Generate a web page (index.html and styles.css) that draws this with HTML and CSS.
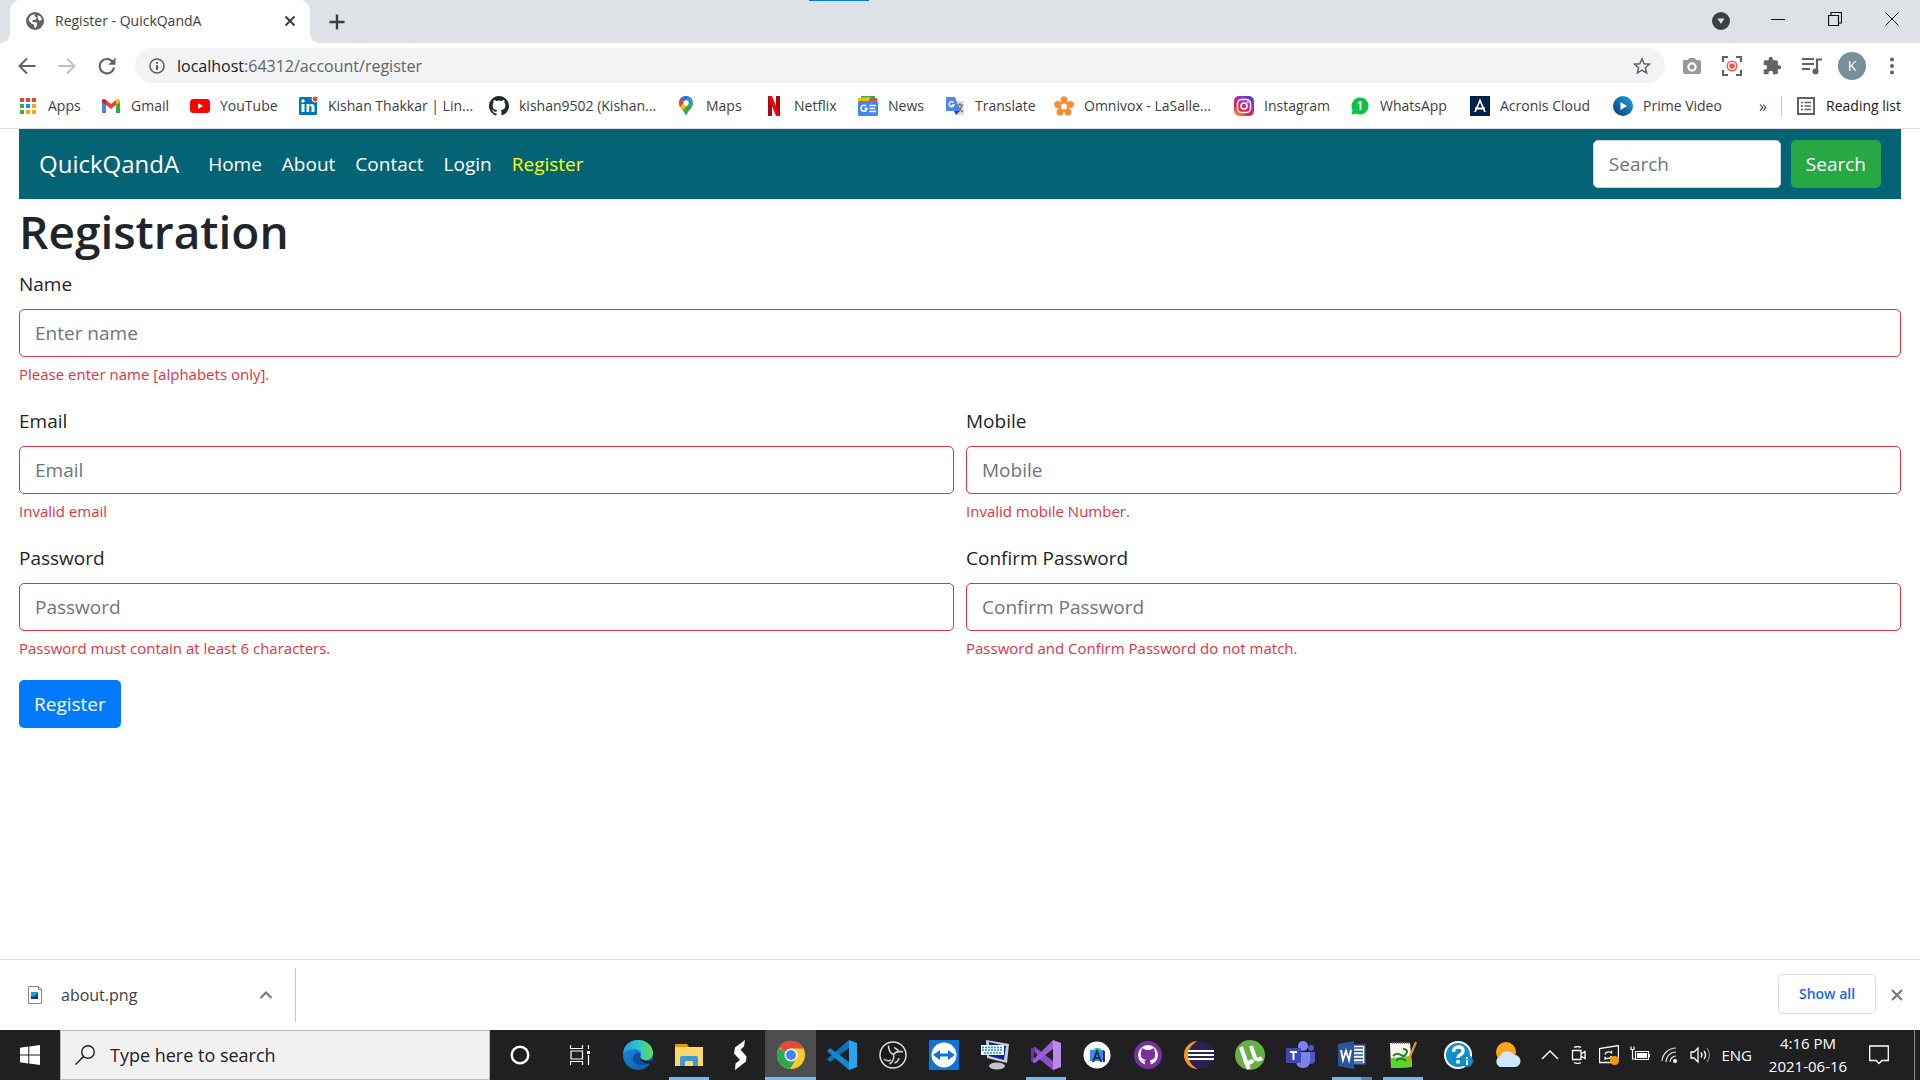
FILE: index.html
```html
<!DOCTYPE html>
<html lang="en">
<head>
<meta charset="utf-8">
<title>Register - QuickQandA</title>
<link rel="stylesheet" href="styles.css">
</head>
<body>
<header class="browser">
  <div class="tabstrip">
    <div class="loadbar"></div>
    <div class="tab">
      <svg class="i18" viewBox="0 0 18 18"><circle cx="9" cy="9" r="9" fill="#5f6368"/><path d="M2.500 8C3 5 5.500 2.500 9 2.300L8.500 4l2 1.500-.5 2-3 .5-1 2 4 .2 1.500 1.800-1.500 3.500-1.500.2-.5-3-3-1.500zM11.500 3l3 1.500 1.500 3-2.500 1.500-1.500-2z" fill="#fff"/></svg>
      <span class="tab-title">Register - QuickQandA</span>
      <button class="icon-btn" aria-label="Close tab"><svg class="i12" viewBox="0 0 12 12"><path d="M1.500 1.500l9 9M10.500 1.500l-9 9" stroke="#3c4043" stroke-width="2"/></svg></button>
    </div>
    <button class="icon-btn new-tab" aria-label="New tab"><svg class="i16" viewBox="0 0 16 16"><path d="M8 .5v15M.5 8h15" stroke="#3c4043" stroke-width="2.400"/></svg></button>
    <div class="window-controls">
      <button class="icon-btn tabsearch" aria-label="Search tabs"><svg class="i18" viewBox="0 0 18 18"><circle cx="9" cy="9" r="9" fill="#3c4043"/><path d="M5.500 6.500h7L9 12z" fill="#dee1e6"/></svg></button>
      <button class="icon-btn" aria-label="Minimise"><svg class="i14" viewBox="0 0 14 14"><path d="M0 7.500h14" stroke="#111"/></svg></button>
      <button class="icon-btn" aria-label="Restore"><svg class="i14" viewBox="0 0 14 14"><path d="M.5 3.500h10v10H.5zM3 3V.5h10.500V11H11" fill="none" stroke="#111" stroke-width="1.200"/></svg></button>
      <button class="icon-btn" aria-label="Close"><svg class="i14" viewBox="0 0 14 14"><path d="M.5.5l13 13M13.500.5l-13 13" stroke="#111"/></svg></button>
    </div>
  </div>
  <div class="toolbar">
    <button class="icon-btn" aria-label="Back"><svg class="i18" viewBox="0 0 18 18"><path d="M17.500 9H2M9 1.500L1.500 9 9 16.500" fill="none" stroke="#5f6368" stroke-width="2"/></svg></button>
    <button class="icon-btn" aria-label="Forward"><svg class="i18" viewBox="0 0 18 18"><path d="M.5 9H16M9 1.500L16.500 9 9 16.500" fill="none" stroke="#bfc1c4" stroke-width="2"/></svg></button>
    <button class="icon-btn" aria-label="Reload"><svg class="i18" viewBox="0 0 18 18"><path d="M14.800 5A7.200 7.200 0 1 0 16 10.500" fill="none" stroke="#5f6368" stroke-width="2.100"/><path d="M17.500.5v7.300h-7.300z" fill="#5f6368"/></svg></button>
    <div class="omnibox">
      <svg class="i16" viewBox="0 0 16 16"><circle cx="8" cy="8" r="7" fill="none" stroke="#5f6368" stroke-width="1.600"/><path d="M8 7v5M8 4v1.800" stroke="#5f6368" stroke-width="2"/></svg>
      <span class="url"><b>localhost</b>:64312/account/register</span>
      <svg class="i18" viewBox="0 0 18 18"><path d="M9 1.800l2.100 4.900 5.300.5-4 3.500 1.200 5.200L9 13.100l-4.600 2.800 1.200-5.200-4-3.500 5.300-.5z" fill="none" stroke="#5f6368" stroke-width="1.500"/></svg>
    </div>
    <div class="extensions">
      <svg class="i20" viewBox="0 0 20 20"><path d="M2 4h4l1-2h6l1 2h3q2 0 2 2v10q0 2-2 2H3q-2 0-2-2V6q0-2 1-2z" fill="#999"/><circle cx="10" cy="11" r="3.600" fill="#999" stroke="#fff" stroke-width="2.200"/></svg>
      <svg class="i20" viewBox="0 0 20 20"><path d="M1 6V1h5M14 1h5v5M19 14v5h-5M6 19H1v-5" fill="none" stroke="#5f6368" stroke-width="2.200"/><circle cx="10" cy="10" r="4.800" fill="none" stroke="#f0594c" stroke-width="1.400"/><circle cx="10" cy="10" r="2.800" fill="#f0594c"/></svg>
      <svg class="i20" viewBox="0 0 24 24"><path d="M20.500 11H19V7c0-1.100-.9-2-2-2h-4V3.500a2.500 2.500 0 0 0-5 0V5H4a2 2 0 0 0-2 2v3.800h1.500a2.700 2.700 0 0 1 0 5.400H2V20a2 2 0 0 0 2 2h3.800v-1.500a2.700 2.700 0 0 1 5.400 0V22H17a2 2 0 0 0 2-2v-4h1.500a2.500 2.500 0 0 0 0-5z" fill="#5f6368"/></svg>
      <svg class="i20" viewBox="0 0 20 20"><path d="M0 3h12M0 8h12M0 13h8" stroke="#5f6368" stroke-width="2"/><path d="M15 16V3.500h5" fill="none" stroke="#5f6368" stroke-width="2.200"/><circle cx="13.500" cy="15.500" r="3" fill="#5f6368"/></svg>
      <span class="avatar">K</span>
      <svg class="i20" viewBox="0 0 20 20" fill="#5f6368"><circle cx="10" cy="3.500" r="2"/><circle cx="10" cy="10" r="2"/><circle cx="10" cy="16.500" r="2"/></svg>
    </div>
  </div>
  <nav class="bookmarks">
    <a href="#"><svg class="i20" viewBox="0 0 20 20"><path d="M2 2h4v4H2zM8 2h4v4H8zM14 2h4v4h-4z" fill="#ea4335"/><path d="M2 8h4v4H2z" fill="#34a853"/><path d="M8 8h4v4H8z" fill="#1a8cff"/><path d="M14 8h4v4h-4zM8 14h4v4H8zM14 14h4v4h-4z" fill="#fba70b"/><path d="M2 14h4v4H2z" fill="#34a853"/></svg>Apps</a>
    <a href="#"><svg class="i20" viewBox="0 0 20 20"><path d="M1 5v12h4V8z" fill="#4285f4"/><path d="M15 8v9h4V5z" fill="#34a853"/><path d="M5 4l5 4 5-4v5l-5 4-5-4z" fill="#ea4335"/><path d="M1 5c0-2 2-3 4-1v5L1 6z" fill="#c5221f"/><path d="M19 5c0-2-2-3-4-1v5l4-3z" fill="#fbbc04"/></svg>Gmail</a>
    <a href="#"><svg class="i20" viewBox="0 0 20 20"><rect y="3" width="20" height="14" rx="3.500" fill="#f00"/><path d="M8 7v6l5-3z" fill="#fff"/></svg>YouTube</a>
    <a href="#"><svg class="i20" viewBox="0 0 20 20"><rect x="1" y="1" width="18" height="18" rx="1.500" fill="#0077b5"/><path d="M3.500 8h3v8h-3zM8.500 8h2.700v1.200C13 7 16.500 7.800 16.500 11v5h-3v-4.500c0-2-2.300-1.800-2.300 0V16H8.500z" fill="#fff"/><circle cx="5" cy="5" r="1.700" fill="#fff"/><circle cx="17" cy="3" r="3" fill="#f44336" stroke="#fff"/></svg>Kishan Thakkar | Lin...</a>
    <a href="#"><svg class="i20" viewBox="0 0 16 16"><path fill="#24292e" d="M8 0C3.580 0 0 3.580 0 8c0 3.540 2.290 6.530 5.470 7.590.4.070.55-.17.55-.38v-1.490C3.780 14.200 3.310 12.600 3.310 12.600c-.36-.92-.9-1.170-.9-1.170-.7-.5.05-.5.05-.5.8.06 1.230.83 1.230.83.72 1.230 1.870.87 2.330.66.07-.52.280-.87.5-1.070-1.770-.2-3.640-.89-3.640-3.950 0-.87.31-1.590.82-2.150-.08-.2-.36-1.020.08-2.120 0 0 .67-.21 2.200.82a7.600 7.600 0 0 1 4 0c1.530-1.040 2.200-.82 2.200-.82.44 1.100.16 1.920.08 2.120.51.56.82 1.270.82 2.150 0 3.070-1.870 3.750-3.650 3.950.29.25.54.73.54 1.480v2.200c0 .21.15.46.55.38A8 8 0 0 0 16 8c0-4.420-3.580-8-8-8z"/></svg>kishan9502 (Kishan...</a>
    <a href="#"><svg class="i20" viewBox="0 0 20 20"><path d="M10 0a7 7 0 0 1 7 7c0 5-5 7-7 13C8 14 3 12 3 7a7 7 0 0 1 7-7z" fill="#34a853"/><path d="M10 0a7 7 0 0 1 6.500 4.500L10 8z" fill="#4285f4"/><path d="M4.500 2.600A7 7 0 0 1 10 0l2 .3L8 7z" fill="#1a73e8"/><path d="M4.500 2.600L9 6l-5 5C2.500 8 2.700 5 4.500 2.600z" fill="#ea4335"/><path d="M4 11l5-5 3 3-5.500 5.500z" fill="#fbbc04"/><circle cx="10" cy="7" r="2.700" fill="#fff"/></svg>Maps</a>
    <a href="#"><svg class="i20" viewBox="0 0 20 20"><path d="M4 0h4v20H4zM12 0h4v20h-4z" fill="#b1060f"/><path d="M4 0h4l8 20h-4z" fill="#e50914"/></svg>Netflix</a>
    <a href="#"><svg class="i20" viewBox="0 0 20 20"><path d="M3 0h14v6H3z" fill="#34a853"/><path d="M0 2l12-1 2 6H0z" fill="#fbbc04"/><path d="M11 3l8-1v5h-8z" fill="#ea4335"/><rect y="5" width="20" height="15" rx="1.500" fill="#4285f4"/><path d="M8 10a3 3 0 1 0 1 2.500H6.500M11.500 9.500H18M11.500 12.500H17M11.500 15.500H18" fill="none" stroke="#fff" stroke-width="1.600"/></svg>News</a>
    <a href="#"><svg class="i20" viewBox="0 0 20 20"><path d="M9 5h10v14h-8z" fill="#dadce0"/><path d="M12 9h6M15 7v2M17 9c-1 4-3 6-5 7M13 10c1 3 3 5 5 6" fill="none" stroke="#5f6368" stroke-width="1.100"/><path d="M2 1h8l5 14H2q-1 0-1-1V2q0-1 1-1z" fill="#4c86ee"/><path d="M9 15h6l-4 4z" fill="#174ea6"/><path d="M8.500 6.500A2.500 2.500 0 1 0 9 9H6.500" fill="none" stroke="#fff" stroke-width="1.400"/></svg>Translate</a>
    <a href="#"><svg class="i20" viewBox="0 0 20 20"><g fill="#fb8c35"><circle cx="10" cy="3.700" r="3.500"/><circle cx="3.700" cy="8.500" r="3.500"/><circle cx="16.300" cy="8.500" r="3.500"/><circle cx="6" cy="16" r="3.500"/><circle cx="14" cy="16" r="3.500"/><circle cx="10" cy="10.500" r="5.500"/></g><circle cx="10" cy="10.500" r="3" fill="#fff"/></svg>Omnivox - LaSalle...</a>
    <a href="#"><svg class="i20" viewBox="0 0 20 20"><defs><linearGradient id="ig" x1="0" y1="1" x2=".7" y2="0"><stop offset="0" stop-color="#fec053"/><stop offset=".35" stop-color="#f2203e"/><stop offset=".65" stop-color="#b729a8"/><stop offset="1" stop-color="#5342d6"/></linearGradient></defs><rect width="20" height="20" rx="5" fill="url(#ig)"/><rect x="3.500" y="3.500" width="13" height="13" rx="4" fill="none" stroke="#fff" stroke-width="1.500"/><circle cx="10" cy="10" r="3" fill="none" stroke="#fff" stroke-width="1.600"/><circle cx="13.800" cy="6.200" r="1" fill="#fff"/></svg>Instagram</a>
    <a href="#"><svg class="i20" viewBox="0 0 20 20"><path d="M10 1.500a8.500 8.500 0 1 1-4 16l-4.500 1 1-4.500a8.500 8.500 0 0 1 7.500-12.500z" fill="#0dc143"/><path d="M8 7.500l2.500-1.500v8" fill="none" stroke="#fff" stroke-width="1.800"/></svg>WhatsApp</a>
    <a href="#"><svg class="i20" viewBox="0 0 20 20"><path d="M0 0h20v20H0z" fill="#00204d"/><path d="M5 16l5-11.500L15 16M5 12.500h10" fill="none" stroke="#fff" stroke-width="1.800"/></svg>Acronis Cloud</a>
    <a href="#"><svg class="i20" viewBox="0 0 20 20"><defs><linearGradient id="pv" x1="0" y1="1" x2="1" y2="0"><stop offset="0" stop-color="#0a3a73"/><stop offset="1" stop-color="#1ba7e0"/></linearGradient></defs><circle cx="10" cy="10" r="10" fill="url(#pv)"/><path d="M7.500 6v8l6.500-4z" fill="#fff"/></svg>Prime Video</a>
    <button class="more" aria-label="More bookmarks">»</button>
    <a class="reading" href="#"><svg class="i20" viewBox="0 0 20 20"><path d="M2 2h16v16H2z" fill="none" stroke="#5f6368" stroke-width="2"/><path d="M5 6.500h2M5 10h2M5 13.500h2M8.500 6.500H15M8.500 10H15M8.500 13.500H15" stroke="#5f6368" stroke-width="1.600"/></svg>Reading list</a>
  </nav>
</header>

<main class="page">
  <nav class="navbar">
    <a class="brand" href="#">QuickQandA</a>
    <div class="nav-links">
      <a href="#">Home</a>
      <a href="#">About</a>
      <a href="#">Contact</a>
      <a href="#">Login</a>
      <a class="active" href="#">Register</a>
    </div>
    <form class="nav-search">
      <input class="control" type="search" placeholder="Search" aria-label="Search">
      <button class="btn btn-green" type="button">Search</button>
    </form>
  </nav>
  <h1>Registration</h1>
  <form class="register">
    <div class="field wide">
      <label for="name">Name</label>
      <input class="control invalid" id="name" type="text" placeholder="Enter name">
      <small>Please enter name [alphabets only].</small>
    </div>
    <div class="field">
      <label for="email">Email</label>
      <input class="control invalid" id="email" type="email" placeholder="Email">
      <small>Invalid email</small>
    </div>
    <div class="field">
      <label for="mobile">Mobile</label>
      <input class="control invalid" id="mobile" type="tel" placeholder="Mobile">
      <small>Invalid mobile Number.</small>
    </div>
    <div class="field">
      <label for="password">Password</label>
      <input class="control invalid" id="password" type="password" placeholder="Password">
      <small>Password must contain at least 6 characters.</small>
    </div>
    <div class="field">
      <label for="confirm">Confirm Password</label>
      <input class="control invalid" id="confirm" type="password" placeholder="Confirm Password">
      <small>Password and Confirm Password do not match.</small>
    </div>
    <button class="btn btn-blue" type="button">Register</button>
  </form>
</main>

<section class="downloads">
  <div class="download">
    <svg class="i20" viewBox="0 0 20 20"><path d="M3.500 1.500h10l3 3v14h-13z" fill="#fff" stroke="#888"/><path d="M13.500 1.500v3h3" fill="none" stroke="#888"/><path d="M6 7h7v7H6z" fill="#2196d9"/><path d="M6 11l3 1 4-4v6H6z" fill="#123a7c"/></svg>
    <span class="file">about.png</span>
    <button class="icon-btn" aria-label="Options"><svg class="i14" viewBox="0 0 14 14"><path d="M1.500 10L7 4.500l5.500 5.500" fill="none" stroke="#76797d" stroke-width="2.200"/></svg></button>
  </div>
  <button class="show-all">Show all</button>
  <button class="icon-btn" aria-label="Close downloads"><svg class="i12" viewBox="0 0 12 12"><path d="M1 1l10 10M11 1L1 11" stroke="#76797d" stroke-width="2.200"/></svg></button>
</section>

<footer class="taskbar">
  <button class="start" aria-label="Start"><svg class="i20" viewBox="0 0 20 20" fill="#fff"><path d="M0 2.700l8.300-1.100v8H0zM9.300 1.500L20 0v9.500H9.300zM0 10.500h8.300v8L0 17.300zM9.300 10.500H20V20L9.300 18.600z"/></svg></button>
  <label class="find">
    <svg class="i20" viewBox="0 0 20 20"><circle cx="13" cy="7" r="6.300" fill="none" stroke="#222" stroke-width="1.400"/><path d="M8.500 11.500L.5 19.500" stroke="#222" stroke-width="1.500"/></svg>
    <input type="text" placeholder="Type here to search" aria-label="Type here to search">
  </label>
  <div class="shell">
    <button aria-label="Cortana"><svg class="i20" viewBox="0 0 20 20"><circle cx="10" cy="10" r="8.300" fill="none" stroke="#fff" stroke-width="2.400"/></svg></button>
    <button aria-label="Task view"><svg class="i20" viewBox="0 0 20 20"><path d="M.5 0v3.500h12V0M.5 20v-3.500h12V20M1 6h11.500v8H1zM18.500 0v4M18.500 10v10" fill="none" stroke="#fff" stroke-width="1.200"/><path d="M17 6h3v3h-3z" fill="#fff"/></svg></button>
  </div>
  <div class="apps">
    <button aria-label="Edge"><svg class="i30" viewBox="0 0 30 30"><defs><linearGradient id="e1" x1="0" x2="1"><stop offset="0" stop-color="#1b9fe0"/><stop offset=".5" stop-color="#2cc3d2"/><stop offset="1" stop-color="#5fdc50"/></linearGradient><linearGradient id="e2" x1="0" y1="0" x2="1" y2="1"><stop offset="0" stop-color="#1b8fe0"/><stop offset="1" stop-color="#0c5aa8"/></linearGradient></defs><circle cx="15" cy="15" r="15" fill="url(#e2)"/><path d="M10 21c-1-7 4-9 6-8 3 1 0 4 1 5 3 3 11 2 13-4v8q-3 2-5 2-11 3-15-3z" fill="#0f4f9e"/><path d="M0 13C1 5 7 0 15 0c9 0 15 6 15 13 0 5-4 8-9 7-4-1-5-2-3-4C19 9 10 6 0 13z" fill="url(#e1)"/><path d="M17 17c2 4 9 5.500 12 3l1 2-2 1.500c-5 1-11-1.500-11-6.500z" fill="#202124"/></svg></button>
    <button class="open" aria-label="File Explorer"><svg class="i30" viewBox="0 0 30 30"><path d="M1 4h12l2 3h-14z" fill="#e09b00"/><path d="M1 7h28v19H1z" fill="#ffd76a"/><path d="M6 26V18q0-2 2-2h14q2 0 2 2v8h-5v-5h-8v5z" fill="#3f97d6"/></svg></button>
    <button aria-label="S"><svg class="i30" viewBox="0 0 30 30"><path d="M20 0L10 7.500l-1 6L15 20l-4.500 3.500L10 30l11-8.500.500-5L15.500 9.500l3.500-3z" fill="#fff"/></svg></button>
    <button class="current" aria-label="Chrome"><svg class="i30" viewBox="0 0 30 30"><circle cx="15" cy="15" r="14" fill="#fbc934"/><path d="M15 15L3 7.500A14 14 0 0 1 27.500 8.500H15z" fill="#e44a3c"/><path d="M15 15L2.700 8A14 14 0 0 0 14 29l6-10z" fill="#2da94f"/><circle cx="15" cy="15" r="6.500" fill="#fff"/><circle cx="15" cy="15" r="5" fill="#4285f4"/></svg></button>
    <button aria-label="Visual Studio Code"><svg class="i30" viewBox="0 0 30 30"><path d="M22 0l8 3v24l-8 3z" fill="#2aa3ef"/><path d="M22 0v8L3 22l-3-3z" fill="#0b74bd"/><path d="M0 11l3-3 19 14v8z" fill="#1387d0"/></svg></button>
    <button aria-label="OBS"><svg class="i30" viewBox="0 0 30 30"><circle cx="15" cy="15" r="13" fill="#1d1a1d" stroke="#ddd" stroke-width="1.500"/><path d="M10.500 5.500q0 7 5 9M25 12q-6-2-9.500 2.500M15.500 14.500q1.500 6-4 9.500M6 19q3.500 3 7 1M16 7.500q4.500 2 5 5M21 18q-1 4-4.500 5" fill="none" stroke="#ccc" stroke-width="1.600"/></svg></button>
    <button aria-label="TeamViewer"><svg class="i30" viewBox="0 0 30 30"><rect width="30" height="30" rx="1" fill="#0e74d8"/><circle cx="15" cy="15" r="12.500" fill="#fff"/><path d="M4 15l7-5v3.500h8V10l7 5-7 5v-3.500h-8V20z" fill="#0e74d8"/></svg></button>
    <button aria-label="On-screen keyboard"><svg class="i30" viewBox="0 0 30 30"><path d="M6 0l23 4-2 19-20-5z" fill="#c9ccd0"/><path d="M9 2l17 4-2 14-15-4z" fill="#0b20a8"/><ellipse cx="17" cy="26" rx="8" ry="3.500" fill="#c2c4c6"/><path d="M1 5h23v10H1z" fill="#e8f4fc"/><path d="M2 7.500h21M2 10h21M4 13h17" stroke="#3a8fd8" stroke-width="1.700" stroke-dasharray="2 1"/></svg></button>
    <button class="open" aria-label="Visual Studio"><svg class="i30" viewBox="0 0 30 30"><path d="M0 9l4-2 18 14v9L4 15.500V23l-4-2z" fill="#8a4fc8"/><path d="M4 23l-4-2V9l4-2v8z" fill="#6b35a5"/><path d="M22 0v9L4 23l-2-1v-2z" fill="#9a5fd6"/><path d="M22 0l8 3v24l-8 3z" fill="#b98ae8"/><path d="M3 11.500v7L6.500 15z" fill="#202022"/></svg></button>
    <button aria-label="Android Studio"><svg class="i30" viewBox="0 0 30 30"><circle cx="15" cy="15" r="13.500" fill="#fff"/><path d="M11 10a5 4 0 0 1 9 0z" fill="#3ddc84"/><path d="M8 10h14v11H8z" fill="#4285f4"/><path d="M11 22l4-11 4 11M12 18h6M22 11v11" fill="none" stroke="#073042" stroke-width="1.800"/></svg></button>
    <button aria-label="GitHub Desktop"><svg class="i30" viewBox="0 0 30 30"><circle cx="15" cy="15" r="14" fill="#7a2f9d"/><circle cx="15" cy="15" r="10" fill="#fff"/><path d="M9 8l4 2h4l4-2 1 5c1 5-2 7-5 7l1 5h-6v-3l-4-2 4 1 1-1c-4-1-6-3-5-8z" fill="#7a2f9d"/></svg></button>
    <button aria-label="Eclipse"><svg class="i30" viewBox="0 0 30 30"><path d="M14 1A14 14 0 0 0 14 29C2 24 2 6 14 1z" fill="#f7941e"/><circle cx="17" cy="15" r="13" fill="#2c2255"/><path d="M4 11h26M4 15h26M4 19h26" stroke="#fff" stroke-width="1.800"/></svg></button>
    <button aria-label="uTorrent"><svg class="i30" viewBox="0 0 30 30"><circle cx="15" cy="15" r="15" fill="#68b044"/><path d="M6 7l5 15q4 2 7-2M16 6l4 12q2 3 7 0" fill="none" stroke="#fff" stroke-width="4"/><path d="M10 20l4 9" stroke="#fff" stroke-width="4"/></svg></button>
    <button aria-label="Teams"><svg class="i30" viewBox="0 0 30 30"><circle cx="17" cy="6" r="5" fill="#7b83eb"/><circle cx="25" cy="8" r="3" fill="#5059c9"/><path d="M20 12h9v8q0 4-5 4z" fill="#5059c9"/><path d="M10 12h14v10q-1 6-7 6t-7-6z" fill="#7b83eb"/><rect y="8" width="15" height="15" rx="1" fill="#4048b0"/><path d="M4 12h7M7.500 12v8" stroke="#fff" stroke-width="1.900"/></svg></button>
    <button class="open stacked" aria-label="Word"><svg class="i30" viewBox="0 0 30 30"><path d="M15 5h13v19H15z" fill="#fff" stroke="#2b579a" stroke-width="1.500"/><path d="M17 8h9M17 11.500h9M17 15h9M17 18.500h9M17 22h9" stroke="#2b579a" stroke-width="1.600"/><path d="M1 4l16-3v28L1 26z" fill="#2b579a"/><path d="M4 10l2 10 3-9 3 9 2-10" fill="none" stroke="#fff" stroke-width="1.900"/></svg></button>
    <button class="open" aria-label="Notepad++"><svg class="i30" viewBox="0 0 30 30"><path d="M2 3h20l2 24-21 1z" fill="#f5f5ee"/><path d="M3 18l20-2 1 11-21 1z" fill="#59d52b"/><path d="M4 3h17" stroke="#777" stroke-width="2" stroke-dasharray="1 1"/><path d="M5 16q4-4 8-1t6-3q0-3-4-3M8 21q5-5 10 0" fill="none" stroke="#267b20" stroke-width="2"/><path d="M28 2L20 21l-1 3" stroke="#e0952b" stroke-width="2.200"/></svg></button>
  </div>
  <div class="tray">
    <svg class="i30 pinned" viewBox="0 0 30 30"><circle cx="15" cy="15" r="13" fill="#0f8fce" stroke="#fff" stroke-width="2"/><path d="M10.500 12q0-5 5-5t4.500 4q0 2-3 4-2 1-2 3M15 20v3.500" fill="none" stroke="#fff" stroke-width="3.400"/><circle cx="24" cy="21" r="6" fill="#0f8fce"/><path d="M24 20v5M24 17v2" stroke="#fff" stroke-width="2"/></svg>
    <svg class="i30 pinned" viewBox="0 0 30 30"><circle cx="14" cy="12" r="10" fill="#fba51b"/><path d="M8 27a6 6 0 0 1 0-11 8 8 0 0 1 14-1 6 6 0 0 1 1 12z" fill="#cfe8fb"/></svg>
    <svg class="i18" viewBox="0 0 18 18"><path d="M1 13l8-8 8 8" fill="none" stroke="#fff" stroke-width="1.500"/></svg>
    <svg class="i18" viewBox="0 0 18 18"><path d="M2.500 4.500h8.500v9H2.500zM11 8l4-2.500v7L11 10M4 1.500q4-2 7 0M4 16.500q4 2 7 0" fill="none" stroke="#fff" stroke-width="1.300"/></svg>
    <svg class="i20" viewBox="0 0 20 20"><path d="M12 17.500H.5v-14L19.500.5v13" fill="none" stroke="#fff" stroke-width="1.300"/><path d="M6 9.500q1-3.500 5-2.500l1.500 1V5.500M12.500 11q-1 3-5 2.500L6 12.500V15" fill="none" stroke="#fff" stroke-width="1.200"/><circle cx="15.500" cy="15.500" r="4.500" fill="#ff9800"/></svg>
    <svg class="i20" viewBox="0 0 20 20"><path d="M5.500 6.500h13v8h-13zM2.500 7v7h3M1 1.500v3h3v-3M.5 4.500h4M2.500 4.500V7" fill="none" stroke="#fff" stroke-width="1.200"/><path d="M7 8h10v5H7zM19 9h1v3h-1z" fill="#fff"/></svg>
    <svg class="i18" viewBox="0 0 18 18"><path d="M1 15A14 14 0 0 1 15 2M5 16A10 10 0 0 1 15 6M9 16a6 6 0 0 1 6-6" fill="none" stroke="#ddd" stroke-width="1.200"/><circle cx="14" cy="15" r="2" fill="#fff"/></svg>
    <svg class="i20" viewBox="0 0 20 20"><path d="M1 7h3l4-4v14l-4-4H1z" fill="none" stroke="#fff" stroke-width="1.300"/><path d="M11 7.500q2 2.500 0 5M14 6q3 4 0 8" fill="none" stroke="#fff" stroke-width="1.300"/><path d="M17 3q5 7 0 14" fill="none" stroke="#777" stroke-width="1.300"/></svg>
    <span class="lang">ENG</span>
    <div class="clock"><time>4:16 PM</time><time>2021-06-16</time></div>
    <svg class="i20" viewBox="0 0 20 20"><path d="M.7 1h18.600v14.500H13L10 18.500 7 15.500H.7z" fill="none" stroke="#fff" stroke-width="1.300"/></svg>
  </div>
</footer>
</body>
</html>
```
FILE: styles.css
```css
* { box-sizing: border-box; }

body {
  margin: 0;
  min-height: 100vh;
  display: flex;
  flex-direction: column;
  background: #fff;
  color: #212529;
  font-family: "Open Sans", "Noto Sans", sans-serif;
  font-size: 19px;
  line-height: 30px;
}

button, input { font: inherit; color: inherit; }
button { padding: 0; border: 0; background: none; }
a { color: inherit; text-decoration: none; }
svg { display: block; flex: none; }

.i12 { width: 12px; height: 12px; }
.i14 { width: 14px; height: 14px; }
.i16 { width: 16px; height: 16px; }
.i18 { width: 18px; height: 18px; }
.i20 { width: 20px; height: 20px; }
.i30 { width: 30px; height: 30px; }
.icon-btn { display: flex; align-items: center; justify-content: center; }

/* Browser frame */
.browser { border-bottom: 1px solid #dadce0; font-size: 14px; color: #3c4043; }
.tabstrip {
  position: relative;
  display: flex;
  height: 43px;
  padding-left: 10px;
  background: #dee1e6;
}
.loadbar {
  position: absolute;
  top: 0;
  left: 809px;
  width: 301px;
  height: 1px;
  background: linear-gradient(to right, #0078d7 60px, #e6e6e6 60px);
}
.tab {
  position: relative;
  display: flex;
  align-items: center;
  width: 300px;
  padding: 0 14px 2px 16px;
  gap: 11px;
  border-radius: 10px 10px 0 0;
  background: #fff;
}
/* Flared feet of the active tab */
.tab::before,
.tab::after {
  content: "";
  position: absolute;
  bottom: 0;
  width: 10px;
  height: 10px;
}
.tab::before { right: 100%; background: radial-gradient(circle at 0 0, transparent 10px, #fff 10px); }
.tab::after { left: 100%; background: radial-gradient(circle at 100% 0, transparent 10px, #fff 10px); }
.tab-title { flex: 1; }
.new-tab { width: 54px; }
.window-controls { display: flex; margin-left: auto; height: 37px; }
.window-controls .icon-btn { width: 57px; }
.window-controls .tabsearch { padding-top: 5px; }

.toolbar { display: flex; align-items: center; height: 45px; padding: 0 18px; gap: 22px; }
.omnibox {
  flex: 1;
  display: flex;
  align-items: center;
  gap: 12px;
  height: 35px;
  margin-left: -3px;
  padding: 0 14px;
  border-radius: 18px;
  background: #f1f3f4;
}
.url { flex: 1; font-size: 16px; color: #5f6368; }
.url b { font-weight: 400; color: #202124; }
.extensions { display: flex; align-items: center; gap: 20px; margin-left: -5px; }
.avatar {
  width: 28px;
  height: 28px;
  margin: 0 -4px;
  border-radius: 50%;
  background: #78909c;
  color: #fff;
  line-height: 28px;
  text-align: center;
}

.bookmarks {
  display: grid;
  grid-template-columns: 83px 89px 108px 191px 187px 88px 94px 87px 109px 180px 116px 120px 143px 140px 1fr auto;
  height: 40px;
  padding: 0 19px 4px 18px;
  align-items: center;
  white-space: nowrap;
}
.bookmarks a { display: flex; align-items: center; gap: 10px; }
.more { justify-self: center; padding-right: 8px; font-size: 16px; }
.bookmarks .reading { padding-left: 14px; border-left: 1px solid #c4c7ca; line-height: 20px; color: #202124; }

/* Web page */
.page { flex: 1; padding: 0 19px; }
.navbar {
  display: flex;
  align-items: center;
  height: 70px;
  padding: 0 20px;
  background: #046374;
  color: #fff;
}
.brand { font-size: 24px; }
.nav-links { display: flex; gap: 20px; margin-left: 29px; }
.nav-links .active { color: #ff0; }
.nav-search { display: flex; gap: 10px; margin-left: auto; }
.nav-search .control { width: 188px; }

.control {
  width: 100%;
  height: 48px;
  padding: 0 15px;
  border: 1px solid #ced4da;
  border-radius: 5px;
  background: #fff;
  color: #495057;
}
.control::placeholder { color: #6c757d; opacity: 1; }
.invalid { border-color: #dc3545; }
.btn { height: 48px; padding: 0 15px; border-radius: 5px; color: #fff; }
.btn-green { background: #28a745; }
.btn-blue { justify-self: start; background: #007bff; }

h1 { margin: 0; padding: 2px 0 8px; font-size: 46px; font-weight: 600; line-height: 60px; }
.register { display: grid; grid-template-columns: 1fr 1fr; column-gap: 12px; }
.field { display: flex; flex-direction: column; margin-bottom: 20px; }
.field label { margin-bottom: 10px; }
.wide { grid-column: 1 / -1; }
small { margin-top: 5px; font-size: 15px; line-height: 24px; color: #dc3545; }

/* Downloads shelf */
.downloads {
  display: flex;
  align-items: center;
  height: 71px;
  padding-right: 17px;
  border-top: 1px solid #dadce0;
}
.download {
  display: flex;
  align-items: center;
  width: 296px;
  height: 54px;
  padding: 0 22px 0 25px;
  gap: 16px;
  border-right: 1px solid #c4c7ca;
  color: #3c4043;
  font-size: 16px;
}
.file { flex: 1; }
.show-all {
  width: 98px;
  height: 40px;
  margin: 0 15px 2px auto;
  border: 1px solid #dadce0;
  border-radius: 5px;
  color: #1a66e8;
  font-size: 14px;
  font-weight: 600;
}

/* Taskbar */
.taskbar { display: flex; height: 50px; background: #202022; color: #fff; }
.taskbar button { display: flex; align-items: center; justify-content: center; }
.start { width: 60px; }
.find {
  display: flex;
  align-items: center;
  width: 430px;
  padding: 0 14px;
  gap: 13px;
  border: 1px solid #bbb;
  background: #f1f1f1;
}
.find input { flex: 1; border: 0; background: none; font-size: 18px; }
.find input::placeholder { color: #222; opacity: 1; }
.shell { display: flex; margin-right: 2px; }
.shell button { width: 60px; }
.apps { display: flex; }
.apps button { width: 51px; border: solid transparent; border-width: 3px 0; }
.apps .open { background: linear-gradient(#76b9ed, #76b9ed) center bottom / 40px 3px no-repeat border-box; }
.apps .stacked { background-image: linear-gradient(to right, #76b9ed 29px, #5688ae 29px); }
.apps .current { border-bottom-color: #76b9ed; background: #4d4c4f; }
.tray {
  display: flex;
  flex: 1;
  align-items: center;
  justify-content: flex-end;
  gap: 11px;
  margin-right: 5px;
  padding-right: 25px;
  border-right: 1px solid #888;
  font-size: 15px;
}
.pinned { margin-right: 8px; }
.clock { display: flex; flex-direction: column; width: 90px; margin-right: 5px; text-align: center; line-height: 23px; }
```
